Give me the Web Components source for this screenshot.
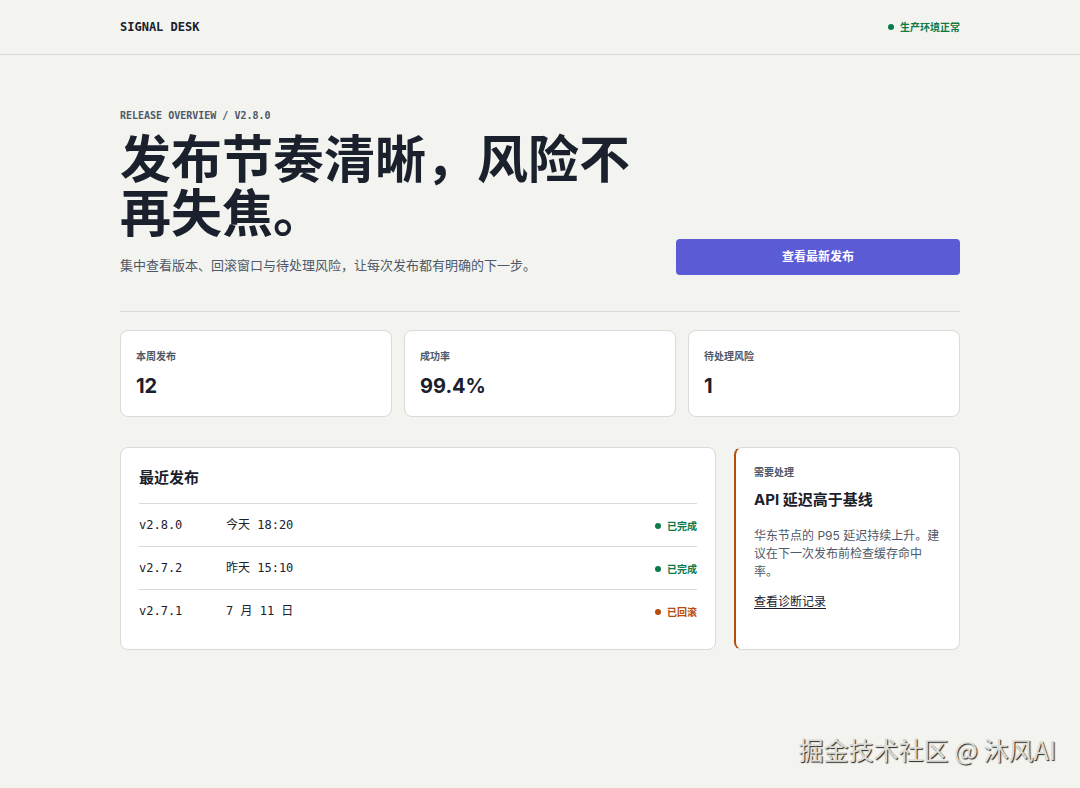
<!DOCTYPE html>
<html lang="zh-CN">
<head>
<meta charset="utf-8">
<meta name="viewport" content="width=device-width, initial-scale=1">
<title>Signal Desk</title>
<style>
  :root {
    --ink: #1a202c;
    --muted: #4f5868;
    --line: #d8dbd8;
    --ok: #0b7a4b;
    --warn: #b84a0c;
    --accent: #5b5bd6;
    --mono: "DejaVu Sans Mono", "Noto Sans CJK SC", monospace;
  }
  body {
    margin: 0;
    min-height: 100vh;
    position: relative;
    background: #f3f4ef;
    color: var(--ink);
    font: 12px/18px Inter, "Noto Sans CJK SC", sans-serif;
  }
</style>
</head>
<body>
<release-desk></release-desk>

<script>
const define = (name, html) => {
  const template = document.createElement('template');
  template.innerHTML = html;
  customElements.define(name, class extends HTMLElement {
    constructor() {
      super();
      this.attachShadow({ mode: 'open' }).append(template.content.cloneNode(true));
    }
  });
};

define('status-mark', `
  <style>
    :host { display: inline-flex; align-items: center; gap: 6px; color: var(--ok);
      font: 700 10px/16px Inter, "Noto Sans CJK SC", sans-serif; white-space: nowrap; }
    :host([tone="warn"]) { color: var(--warn); }
    i { width: 6px; height: 6px; border-radius: 50%; background: currentColor; }
  </style>
  <i></i><span><slot></slot></span>`);

define('desk-header', `
  <style>
    :host { display: block; border-bottom: 1px solid var(--line); }
    header { display: flex; align-items: center; justify-content: space-between;
      max-width: 840px; padding: 18px 0; margin: 0 auto; }
    strong { font: 700 12px/18px var(--mono); }
  </style>
  <header><strong>SIGNAL DESK</strong><status-mark>生产环境正常</status-mark></header>`);

define('desk-hero', `
  <style>
    :host { display: grid; grid-template-columns: 1fr 284px; gap: 24px; align-items: end;
      padding: 53px 0 36px; border-bottom: 1px solid var(--line); }
    .eyebrow { margin: 0 0 9px; color: var(--muted); font: 700 10px/16px var(--mono); }
    h1 { margin: 0; font-size: 51px; line-height: 54px; font-weight: 700; }
    .lead { margin: 14px 0 0; color: var(--muted); font-size: 13px; line-height: 20px; }
    button { width: 100%; height: 36px; border: 0; border-radius: 4px; background: var(--accent);
      color: #fff; font: 700 12px/18px Inter, "Noto Sans CJK SC", sans-serif; cursor: pointer; }
  </style>
  <div>
    <p class="eyebrow">RELEASE OVERVIEW / V2.8.0</p>
    <h1>发布节奏清晰，风险不再失焦。</h1>
    <p class="lead">集中查看版本、回滚窗口与待处理风险，让每次发布都有明确的下一步。</p>
  </div>
  <button type="button">查看最新发布</button>`);

define('metric-card', `
  <style>
    :host { display: block; padding: 17px 15px 16px; border: 1px solid var(--line);
      border-radius: 8px; background: #fff; }
    .label { color: var(--muted); font-size: 10px; line-height: 16px; font-weight: 700; }
    .value { margin-top: 8px; font-size: 20px; line-height: 28px; font-weight: 700; }
  </style>
  <div class="label"><slot name="label"></slot></div>
  <div class="value"><slot></slot></div>`);

define('release-list', `
  <style>
    :host { display: block; padding: 20px 18px 17px; border: 1px solid var(--line);
      border-radius: 8px; background: #fff; }
    h2 { margin: 0 0 15px; font-size: 15px; line-height: 20px; font-weight: 700; }
    table { width: 100%; border-collapse: collapse; font: 12px/18px var(--mono); }
    td { height: 42px; padding: 0; border-top: 1px solid var(--line); }
    td:first-child { width: 87px; }
    td:last-child { text-align: right; }
    status-mark { vertical-align: bottom; }
  </style>
  <h2 id="title">最近发布</h2>
  <table aria-labelledby="title">
    <tr><td>v2.8.0</td><td>今天 18:20</td><td><status-mark>已完成</status-mark></td></tr>
    <tr><td>v2.7.2</td><td>昨天 15:10</td><td><status-mark>已完成</status-mark></td></tr>
    <tr><td>v2.7.1</td><td>7 月 11 日</td><td><status-mark tone="warn">已回滚</status-mark></td></tr>
  </table>`);

define('risk-card', `
  <style>
    :host { display: block; padding: 16px 18px; border: 1px solid var(--line);
      border-left: 2px solid var(--warn); border-radius: 8px; background: #fff; }
    .label { color: var(--muted); font-size: 10px; line-height: 16px; font-weight: 700; }
    h2 { margin: 10px 0 17px; font-size: 15px; line-height: 20px; font-weight: 700; }
    p { margin: 0 0 12px; color: var(--muted); }
    a { color: var(--ink); text-underline-offset: 2px; }
  </style>
  <div class="label">需要处理</div>
  <h2>API 延迟高于基线</h2>
  <p>华东节点的 P95 延迟持续上升。建议在下一次发布前检查缓存命中率。</p>
  <a href="#diagnostics">查看诊断记录</a>`);

define('page-credit', `
  <style>
    :host { position: absolute; right: 24px; bottom: 21px; color: #dddeda;
      font: 25px/36px "Noto Sans CJK SC", sans-serif; white-space: nowrap;
      text-shadow: 1px 1px 1px #222; }
  </style>
  <slot></slot>`);

define('release-desk', `
  <style>
    :host { display: block; }
    main { max-width: 840px; margin: 0 auto; }
    .metrics { display: grid; grid-template-columns: repeat(3, 1fr); gap: 12px; margin: 18px 0 30px; }
    .details { display: grid; grid-template-columns: 1fr 226px; gap: 18px; }
  </style>
  <desk-header></desk-header>
  <main>
    <desk-hero></desk-hero>
    <section class="metrics">
      <metric-card><span slot="label">本周发布</span>12</metric-card>
      <metric-card><span slot="label">成功率</span>99.4%</metric-card>
      <metric-card><span slot="label">待处理风险</span>1</metric-card>
    </section>
    <section class="details">
      <release-list></release-list>
      <risk-card></risk-card>
    </section>
  </main>
  <page-credit>掘金技术社区 @ 沐风AI</page-credit>`);
</script>
</body>
</html>
